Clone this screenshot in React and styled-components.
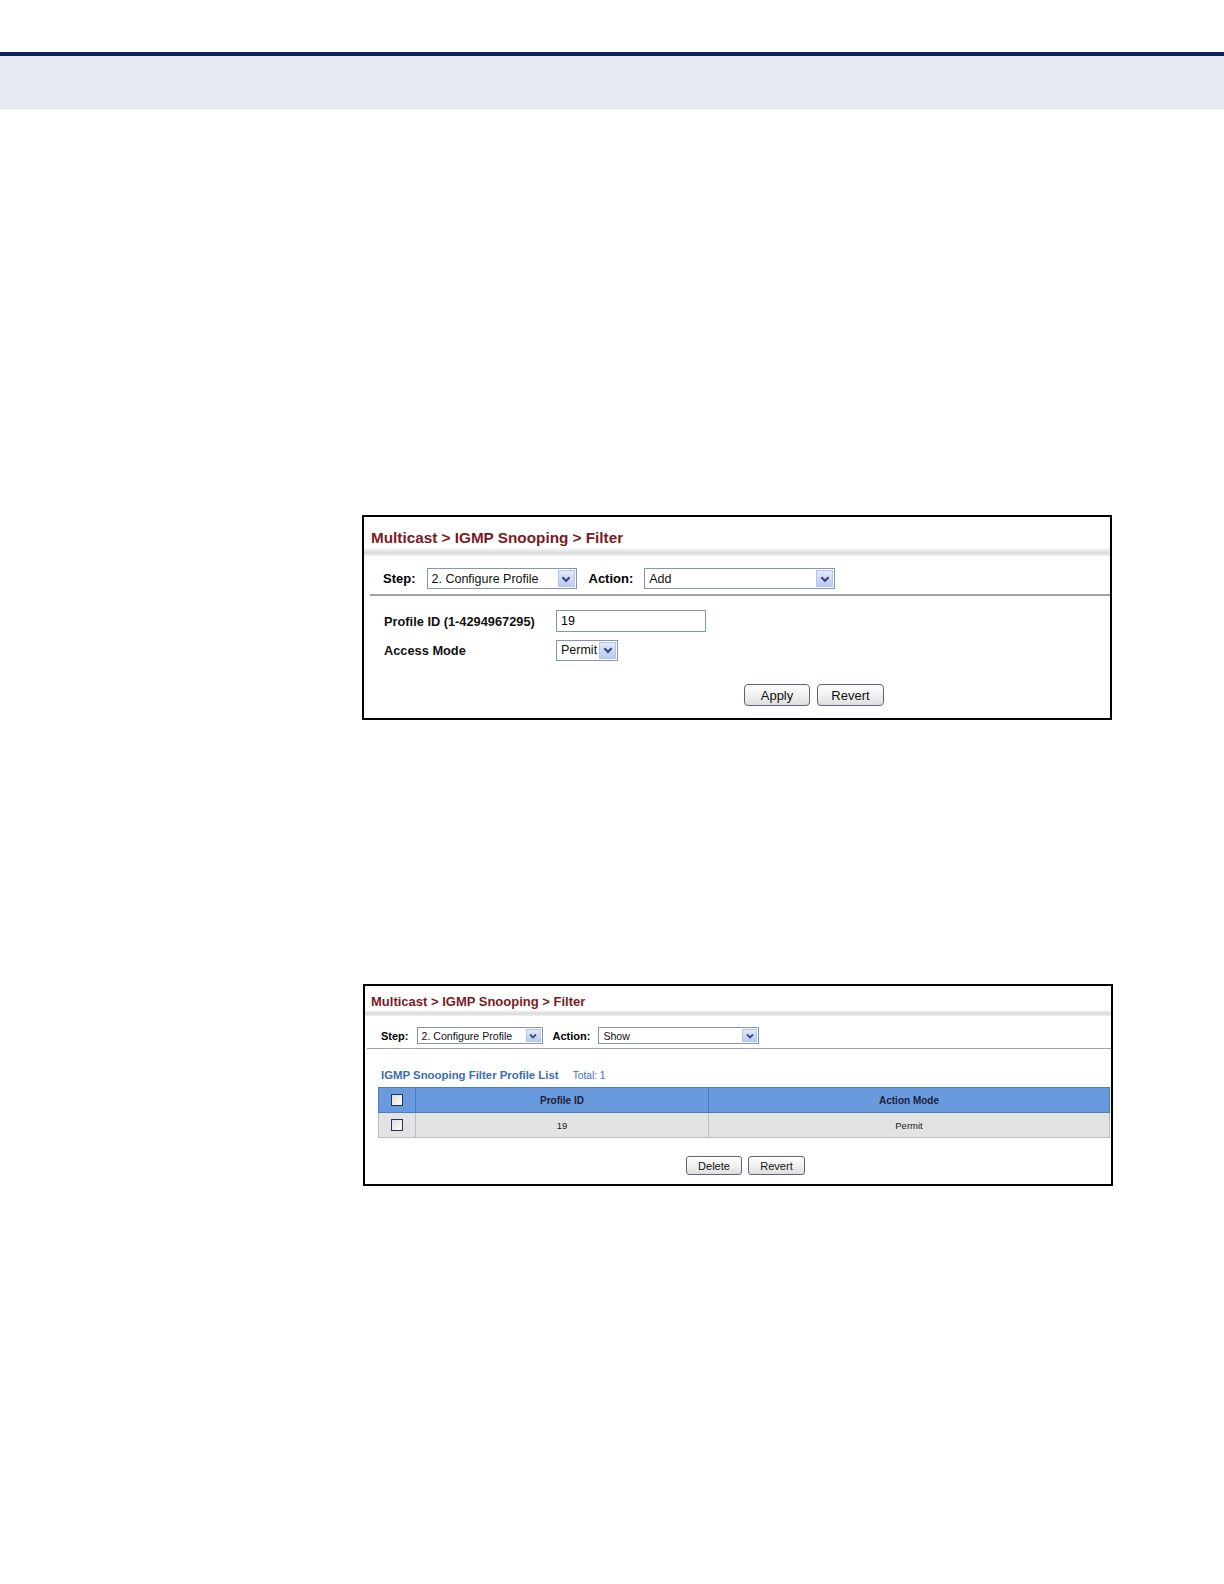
import styled, { createGlobalStyle } from "styled-components";

const GlobalStyle = createGlobalStyle`
    body {
        margin: 0;
        background: #ffffff;
        font-family: "Liberation Sans", Arial, sans-serif;
        color: #000000;
    }
`

// sizes for the full-size panel and the shrunk one
const sizes = {
    large: {
        titleFont: 15.3, titleHeight: 31, titlePad: 12, titleIndent: 7, band: 8,
        labelFont: 13, valueFont: 12.5, control: 21, arrow: 17,
        rowPad: '12px 0 5px 19px', dividerIndent: 6, divider: 2,
    },
    small: {
        titleFont: 13, titleHeight: 24, titlePad: 7, titleIndent: 6, band: 6,
        labelFont: 11, valueFont: 10.6, control: 17, arrow: 15,
        rowPad: '11px 0 4px 16px', dividerIndent: 2, divider: 1,
    },
}

function Chevron({ size }) {
    return (
        <svg width={size} height={size} viewBox="0 0 10 10">
            <path d="M2 3.5 L5 6.5 L8 3.5" fill="none" stroke="#3b4c86" strokeWidth="1.9" strokeLinejoin="miter" />
        </svg>
    )
}

function Select({ value, width, size }) {
    const s = sizes[size]
    return (
        <SelectBox $width={width} $size={size}>
            <SelectValue $font={s.valueFont}>{value}</SelectValue>
            <ArrowBox $w={s.arrow}>
                <Chevron size={s.arrow - 5} />
            </ArrowBox>
        </SelectBox>
    )
}

function StepBar({ size, stepWidth, actionWidth, action }) {
    return (
        <Toolbar $size={size}>
            <Label $size={size}>Step:</Label>
            <Select value="2. Configure Profile" width={stepWidth} size={size} />
            <Label $size={size} $pad>Action:</Label>
            <Select value={action} width={actionWidth} size={size} />
        </Toolbar>
    )
}

function App() {
    return (
        <>
            <GlobalStyle />
            <Page>
                <HeaderBand />
                <Content>
                    <Panel $top={406}>
                        <Title $size="large">Multicast &gt; IGMP Snooping &gt; Filter</Title>
                        <TitleShade $h={sizes.large.band} />
                        <StepBar size="large" stepWidth={150} actionWidth={191} action="Add" />
                        <Divider $size="large" />
                        <Form>
                            <FormRow>
                                <FormLabel>Profile ID (1-4294967295)</FormLabel>
                                <TextInput>19</TextInput>
                            </FormRow>
                            <FormRow>
                                <FormLabel>Access Mode</FormLabel>
                                <Select value="Permit" width={62} size="large" />
                            </FormRow>
                        </Form>
                        <Buttons $size="large">
                            <Button $size="large" $w={66}>Apply</Button>
                            <Button $size="large" $w={67}>Revert</Button>
                        </Buttons>
                    </Panel>

                    <Panel $top={264} $shift={1}>
                        <Title $size="small">Multicast &gt; IGMP Snooping &gt; Filter</Title>
                        <TitleShade $h={sizes.small.band} />
                        <StepBar size="small" stepWidth={126} actionWidth={161} action="Show" />
                        <Divider $size="small" />
                        <ListHeading>
                            <ListTitle>IGMP Snooping Filter Profile List</ListTitle>
                            <ListTotal>Total: 1</ListTotal>
                        </ListHeading>
                        <Table>
                            <thead>
                                <tr>
                                    <HeadCell $w={37}><CheckBox /></HeadCell>
                                    <HeadCell $w={293}>Profile ID</HeadCell>
                                    <HeadCell>Action Mode</HeadCell>
                                </tr>
                            </thead>
                            <tbody>
                                <tr>
                                    <BodyCell><CheckBox /></BodyCell>
                                    <BodyCell>19</BodyCell>
                                    <BodyCell>Permit</BodyCell>
                                </tr>
                            </tbody>
                        </Table>
                        <Buttons $size="small">
                            <Button $size="small" $w={56}>Delete</Button>
                            <Button $size="small" $w={57}>Revert</Button>
                        </Buttons>
                    </Panel>
                </Content>
            </Page>
        </>
    )
}

export default App;

const Page = styled.div`
    width: 1224px;
    min-height: 1584px;
    padding-top: 52px;
    box-sizing: border-box;
`

const HeaderBand = styled.div`
    height: 53px;
    border-top: 4px solid #0c215e;
    background: #e6e9f0;
`

const Content = styled.div`
    display: flex;
    flex-direction: column;
    padding-left: 362px;
`

const Panel = styled.section`
    width: 750px;
    box-sizing: border-box;
    margin-top: ${({ $top }) => $top}px;
    margin-left: ${({ $shift }) => $shift || 0}px;
    border: 2px solid #000000;
    background: #ffffff;
`

const Title = styled.h1`
    margin: 0;
    box-sizing: border-box;
    height: ${({ $size }) => sizes[$size].titleHeight}px;
    padding: ${({ $size }) => sizes[$size].titlePad}px 0 0 ${({ $size }) => sizes[$size].titleIndent}px;
    font-size: ${({ $size }) => sizes[$size].titleFont}px;
    line-height: 18px;
    font-weight: bold;
    color: #7a1b24;
    white-space: nowrap;
`

const TitleShade = styled.div`
    height: ${({ $h }) => $h}px;
    background: linear-gradient(to bottom, #fafafa 0%, #e2e2e2 45%, #d9d9d9 60%, #f2f2f2 100%);
`

const Toolbar = styled.div`
    display: flex;
    align-items: center;
    padding: ${({ $size }) => sizes[$size].rowPad};
`

const Label = styled.span`
    font-size: ${({ $size }) => sizes[$size].labelFont}px;
    font-weight: bold;
    margin-right: ${({ $size }) => $size === 'large' ? 11 : 8}px;
    margin-left: ${({ $pad, $size }) => $pad ? ($size === 'large' ? 12 : 10) : 0}px;
`

const SelectBox = styled.div`
    display: flex;
    align-items: stretch;
    box-sizing: border-box;
    width: ${({ $width }) => $width}px;
    height: ${({ $size }) => sizes[$size].control}px;
    border: 1px solid #8196b3;
    background: #ffffff;
    padding: 1px;
`

const SelectValue = styled.span`
    flex: 1;
    display: flex;
    align-items: center;
    padding-left: 3px;
    font-size: ${({ $font }) => $font}px;
    color: #111111;
    white-space: nowrap;
    overflow: hidden;
`

const ArrowBox = styled.span`
    width: ${({ $w }) => $w}px;
    box-sizing: border-box;
    display: flex;
    align-items: center;
    justify-content: center;
    border: 1px solid #b7c4ea;
    background: linear-gradient(to bottom, #e2e9fc, #bccaf3);
`

const Divider = styled.div`
    margin-left: ${({ $size }) => sizes[$size].dividerIndent}px;
    border-top: ${({ $size }) => sizes[$size].divider}px solid #a4a4a4;
`

const Form = styled.div`
    display: flex;
    flex-direction: column;
    gap: 7px;
    padding: 14px 0 0 20px;
`

const FormRow = styled.div`
    display: flex;
    align-items: center;
    height: 22px;
`

const FormLabel = styled.span`
    width: 172px;
    font-size: 12.8px;
    font-weight: bold;
    color: #111111;
`

const TextInput = styled.div`
    box-sizing: border-box;
    width: 150px;
    height: 22px;
    border: 1px solid #8196b3;
    padding-left: 4px;
    display: flex;
    align-items: center;
    font-size: 12.5px;
`

const Buttons = styled.div`
    display: flex;
    gap: ${({ $size }) => $size === 'large' ? 7 : 6}px;
    padding: ${({ $size }) => $size === 'large' ? '23px 0 12px 380px' : '18px 0 9px 321px'};
`

const Button = styled.button`
    box-sizing: border-box;
    width: ${({ $w }) => $w}px;
    height: ${({ $size }) => $size === 'large' ? 22 : 19}px;
    padding: 0;
    border: 1px solid #5d6574;
    border-radius: ${({ $size }) => $size === 'large' ? 4 : 3}px;
    background: linear-gradient(to bottom, #ffffff 0%, #f1f1f1 50%, #dedede 100%);
    font-family: "Liberation Sans", Arial, sans-serif;
    font-size: ${({ $size }) => $size === 'large' ? 13 : 11}px;
    color: #111111;
`

const ListHeading = styled.div`
    display: flex;
    align-items: baseline;
    gap: 14px;
    padding: 20px 0 0 16px;
    height: 18px;
`

const ListTitle = styled.span`
    font-size: 11.4px;
    font-weight: bold;
    color: #3b6db3;
`

const ListTotal = styled.span`
    font-size: 10.2px;
    color: #3b6db3;
`

const Table = styled.table`
    margin: 0 1px 0 13px;
    width: 732px;
    border-collapse: collapse;
    table-layout: fixed;
`

const HeadCell = styled.th`
    width: ${({ $w }) => $w ? `${$w}px` : 'auto'};
    height: 25px;
    box-sizing: border-box;
    padding: 0;
    background: #6a9ade;
    border: 1px solid #4a7bc6;
    font-size: 10px;
    font-weight: bold;
    color: #1a2238;
    text-align: center;
    vertical-align: middle;
`

const BodyCell = styled.td`
    height: 25px;
    box-sizing: border-box;
    padding: 0;
    background: #e3e3e3;
    border: 1px solid #bdbdbd;
    font-size: 9.5px;
    color: #222222;
    text-align: center;
    vertical-align: middle;
`

const CheckBox = styled.span`
    display: inline-block;
    vertical-align: middle;
    box-sizing: border-box;
    width: 12px;
    height: 12px;
    border: 1px solid #1e3460;
    background: linear-gradient(135deg, #dcdcd6, #ffffff);
`
